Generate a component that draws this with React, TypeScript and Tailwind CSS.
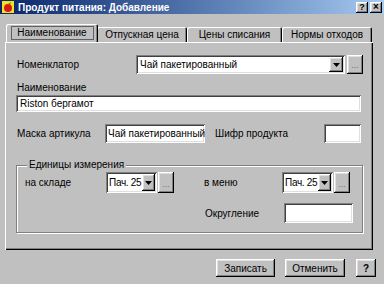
import React from 'react';

const raised =
  'bg-[#c0c0c0] shadow-[inset_-1px_-1px_0_#000,inset_1px_1px_0_#fff,inset_-2px_-2px_0_#808080,inset_2px_2px_0_#dfdfdf]';
const sunken =
  'bg-white shadow-[inset_1px_1px_0_#808080,inset_-1px_-1px_0_#fff,inset_2px_2px_0_#404040,inset_-2px_-2px_0_#dfdfdf]';

const Arrow = () => (
  <svg width="7" height="4" viewBox="0 0 7 4">
    <path d="M0 0h7L3.5 4z" fill="#000" />
  </svg>
);

const Combo = ({ text, w, h, small }: { text: string; w: string; h: string; small?: boolean }) => (
  <div className={`${sunken} ${w} ${h} flex items-stretch p-[2px]`}>
    <span
      className={`flex-1 flex items-center ${small ? 'pl-[1px] tracking-[-0.3px]' : 'pl-[2px]'} overflow-hidden whitespace-nowrap`}
    >
      {text}
    </span>
    <div className={`${raised} ${small ? 'w-[13px]' : 'w-[14px]'} shrink-0 flex items-center justify-center`}>
      <Arrow />
    </div>
  </div>
);

const Dots = ({ h }: { h: string }) => (
  <div className={`${raised} w-[16px] ${h} flex items-end justify-center pb-[4px] text-[9px] leading-none text-[#707070]`}>...</div>
);

const Tab = ({ label, w, active }: { label: string; w: string; active?: boolean }) => (
  <div
    className={`${w} ${
      active ? 'h-[18px] -mr-[1px] z-10' : 'h-[15px]'
    } flex items-center justify-center bg-[#c0c0c0] rounded-t-[2px] shadow-[inset_1px_1px_0_#fff,inset_-1px_0_0_#000,inset_-2px_0_0_#808080]`}
  >
    {active ? (
      <span className="border border-[#606060] leading-[10px] py-[1px] w-[83px] text-center">{label}</span>
    ) : (
      <span>{label}</span>
    )}
  </div>
);

export default function App() {
  return (
    <div
      className="w-[384px] h-[284px] bg-[#c0c0c0] overflow-hidden flex flex-col text-[10px] text-black"
      style={{ fontFamily: '"Liberation Sans", Arial, sans-serif' }}
    >
      {/* title bar */}
      <div className="h-[14px] flex items-center bg-gradient-to-r from-[#0a246a] to-[#a6caf0] pl-[2px] pr-[2px]">
        <svg width="12" height="12" viewBox="0 0 12 12" className="mr-[4px]">
          <rect width="12" height="12" fill="#f8e020" />
          <circle cx="6" cy="7" r="4" fill="#d81818" />
          <path d="M6 3 L9 1 L8 4z" fill="#20a020" />
        </svg>
        <span className="text-white font-bold text-[10px]">Продукт питания: Добавление</span>
        <div className="ml-auto flex gap-[2px]">
          <div className={`${raised} w-[12px] h-[11px] flex items-center justify-center font-bold text-[9px] leading-none`}>?</div>
          <div className={`${raised} w-[12px] h-[11px] flex items-center justify-center font-bold text-[10px] leading-none`}>×</div>
        </div>
      </div>

      {/* tabs */}
      <div className="flex items-end ml-[6px] mt-[11px] h-[17px]">
        <Tab label="Наименование" w="w-[92px]" active />
        <Tab label="Отпускная цена" w="w-[90px]" />
        <Tab label="Цены списания" w="w-[95px]" />
        <Tab label="Нормы отходов" w="w-[90px]" />
      </div>

      {/* tab panel */}
      <div className="ml-[5px] w-[368px] h-[208px] shadow-[inset_1px_1px_0_#fff,inset_-1px_-1px_0_#000,inset_-2px_-2px_0_#808080] flex flex-col pl-[11px]">
        <div className="flex items-center mt-[13px] h-[19px]">
          <span className="w-[120px] pl-[1px]">Номенклатор</span>
          <Combo text="Чай пакетированный" w="w-[209px]" h="h-[19px]" />
          <div className="ml-[2px]">
            <Dots h="h-[19px]" />
          </div>
        </div>

        <div className="mt-[8px] pl-[1px] leading-[12px]">Наименование</div>
        <div className={`${sunken} w-[345px] h-[17px] mt-[1px] flex items-center pl-[4px]`}>Riston бергамот</div>

        <div className="flex items-center mt-[12px] h-[19px]">
          <span className="w-[89px] pl-[1px]">Маска артикула</span>
          <div className={`${sunken} w-[100px] h-[19px] flex items-center pl-[3px] overflow-hidden whitespace-nowrap`}>
            Чай пакетированный
          </div>
          <span className="ml-[10px] w-[109px]">Шифр продукта</span>
          <div className={`${sunken} w-[37px] h-[19px]`} />
        </div>

        {/* group box */}
        <div className="relative mt-[22px] w-[347px] h-[68px] border border-[#808080] shadow-[1px_1px_0_#fff,inset_1px_1px_0_#fff] flex flex-col pl-[8px]">
          <span className="absolute -top-[7px] left-[10px] bg-[#c0c0c0] px-[2px] leading-[12px]">Единицы измерения</span>
          <div className="flex items-center mt-[6px] h-[21px]">
            <span className="w-[81px]">на складе</span>
            <Combo text="Пач. 25" w="w-[51px]" h="h-[21px]" small />
            <div className="ml-[1px]">
              <Dots h="h-[21px]" />
            </div>
            <span className="ml-[30px] w-[78px]">в меню</span>
            <Combo text="Пач. 25" w="w-[51px]" h="h-[21px]" small />
            <div className="ml-[1px]">
              <Dots h="h-[21px]" />
            </div>
          </div>
          <div className="flex items-center mt-[10px] h-[20px]">
            <span className="ml-[180px] w-[79px]">Округление</span>
            <div className={`${sunken} w-[69px] h-[20px]`} />
          </div>
        </div>
      </div>

      {/* buttons */}
      <div className="flex mt-[9px] ml-[216px]">
        <div className={`${raised} w-[59px] h-[18px] flex items-center justify-center`}>Записать</div>
        <div className={`${raised} w-[60px] h-[18px] ml-[10px] flex items-center justify-center`}>Отменить</div>
        <div className={`${raised} w-[20px] h-[18px] ml-[11px] flex items-center justify-center font-bold`}>?</div>
      </div>
    </div>
  );
}
